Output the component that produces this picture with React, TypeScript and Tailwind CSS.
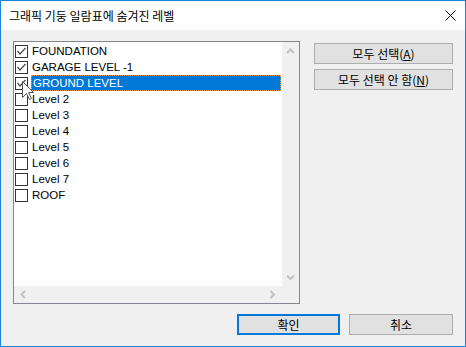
import React from "react";

const levels = [
  { name: "FOUNDATION", checked: true },
  { name: "GARAGE LEVEL -1", checked: true },
  { name: "GROUND LEVEL", checked: true, selected: true },
  { name: "Level 2", checked: false },
  { name: "Level 3", checked: false },
  { name: "Level 4", checked: false },
  { name: "Level 5", checked: false },
  { name: "Level 6", checked: false },
  { name: "Level 7", checked: false },
  { name: "ROOF", checked: false },
];

const kr = { fontFamily: '"Noto Sans CJK KR", "Noto Sans", sans-serif' };
const sans = { fontFamily: '"Liberation Sans", Arial, sans-serif' };

function Check({ checked }: { checked: boolean }) {
  return (
    <div className="h-[13px] w-[13px] shrink-0 border border-[#333333] bg-white">
      {checked && (
        <svg width="11" height="11" viewBox="0 0 11 11">
          <path d="M1.5 5 L4 8 L9.5 2" fill="none" stroke="#4a4a4a" strokeWidth="1.2" />
        </svg>
      )}
    </div>
  );
}

function Chevron({ dir }: { dir: "up" | "down" | "left" | "right" }) {
  const d = {
    up: "M1 5 L4.5 1.5 L8 5",
    down: "M1 1.5 L4.5 5 L8 1.5",
    left: "M5 1 L1.5 4.5 L5 8",
    right: "M1.5 1 L5 4.5 L1.5 8",
  }[dir];
  const w = dir === "up" || dir === "down" ? 9 : 7;
  const h = dir === "up" || dir === "down" ? 7 : 9;
  return (
    <svg width={w} height={h} viewBox={`0 0 ${w} ${h}`}>
      <path d={d} fill="none" stroke="#c2c2c2" strokeWidth="2" />
    </svg>
  );
}

function Button({ children, primary }: { children: React.ReactNode; primary?: boolean }) {
  return (
    <button
      className={
        "flex h-[21px] w-full items-center justify-center bg-[#e1e1e1] text-[12px] leading-none text-black " +
        (primary ? "border-2 border-[#0078d7]" : "border border-[#adadad]")
      }
      style={kr}
    >
      {children}
    </button>
  );
}

export default function App() {
  return (
    <div className="relative flex h-[347px] w-[466px] flex-col border border-[#1883d7] bg-[#f0f0f0]">
      {/* title bar */}
      <div className="flex h-[29px] items-center justify-between bg-white pl-[8px] pr-[9px]">
        <span className="text-[12px] leading-none text-black" style={kr}>
          그래픽 기둥 일람표에 숨겨진 레벨
        </span>
        <svg width="11" height="11" viewBox="0 0 11 11">
          <path d="M0.5 0.5 L10.5 10.5 M10.5 0.5 L0.5 10.5" stroke="#000" strokeWidth="1" />
        </svg>
      </div>

      <div className="flex flex-col pl-[12px] pr-[12px] pt-[11px]">
        <div className="flex gap-[14px]">
          {/* list box */}
          <div className="h-[263px] w-[287px] border border-[#828790] bg-[#f0f0f0]">
            <div className="flex h-[244px]">
              <div className="w-[268px] bg-white pt-[1px]" style={sans}>
                {levels.map((lv) => (
                  <div key={lv.name} className="flex h-[16px] items-center pl-[1px] pr-[1px]">
                    <Check checked={lv.checked} />
                    <span
                      className={
                        "ml-[3px] flex h-[16px] items-center pl-[1px] pt-[1px] text-[11.5px] leading-none " +
                        (lv.selected
                          ? "flex-1 border border-dotted border-[#f59a3a] bg-[#0078d7] pl-0 text-white"
                          : "text-black")
                      }
                    >
                      {lv.name}
                    </span>
                  </div>
                ))}
              </div>
              <div className="flex w-[17px] flex-col items-center justify-between bg-[#f0f0f0]">
                <div className="flex h-[17px] items-center justify-center pt-[2px]">
                  <Chevron dir="up" />
                </div>
                <div className="flex h-[17px] items-center justify-center pb-[1px]">
                  <Chevron dir="down" />
                </div>
              </div>
            </div>
            <div className="flex h-[17px]">
              <div className="flex w-[268px] items-center justify-between px-[6px]">
                <Chevron dir="left" />
                <Chevron dir="right" />
              </div>
              <div className="w-[17px] bg-[#f0f0f0]" />
            </div>
          </div>

          {/* side buttons */}
          <div className="mt-[2px] flex w-[139px] flex-col gap-[5px]">
            <Button>
              모두 선택(<span className="underline">A</span>)
            </Button>
            <Button>
              모두 선택 안 함(<span className="underline">N</span>)
            </Button>
          </div>
        </div>

        <div className="mt-[10px] flex justify-end gap-[9px]">
          <div className="w-[103px]">
            <Button primary>확인</Button>
          </div>
          <div className="w-[104px]">
            <Button>취소</Button>
          </div>
        </div>
      </div>

      {/* mouse cursor */}
      <svg
        className="absolute left-[21px] top-[80px]"
        width="13"
        height="20"
        viewBox="0 0 13 20"
      >
        <path
          d="M0.5 0.5 L0.5 16.5 L4.5 12.5 L7.5 18.5 L9.5 17.5 L6.5 11.5 L11.5 11.5 Z"
          fill="#fff"
          stroke="#555"
          strokeWidth="1"
        />
      </svg>
    </div>
  );
}
